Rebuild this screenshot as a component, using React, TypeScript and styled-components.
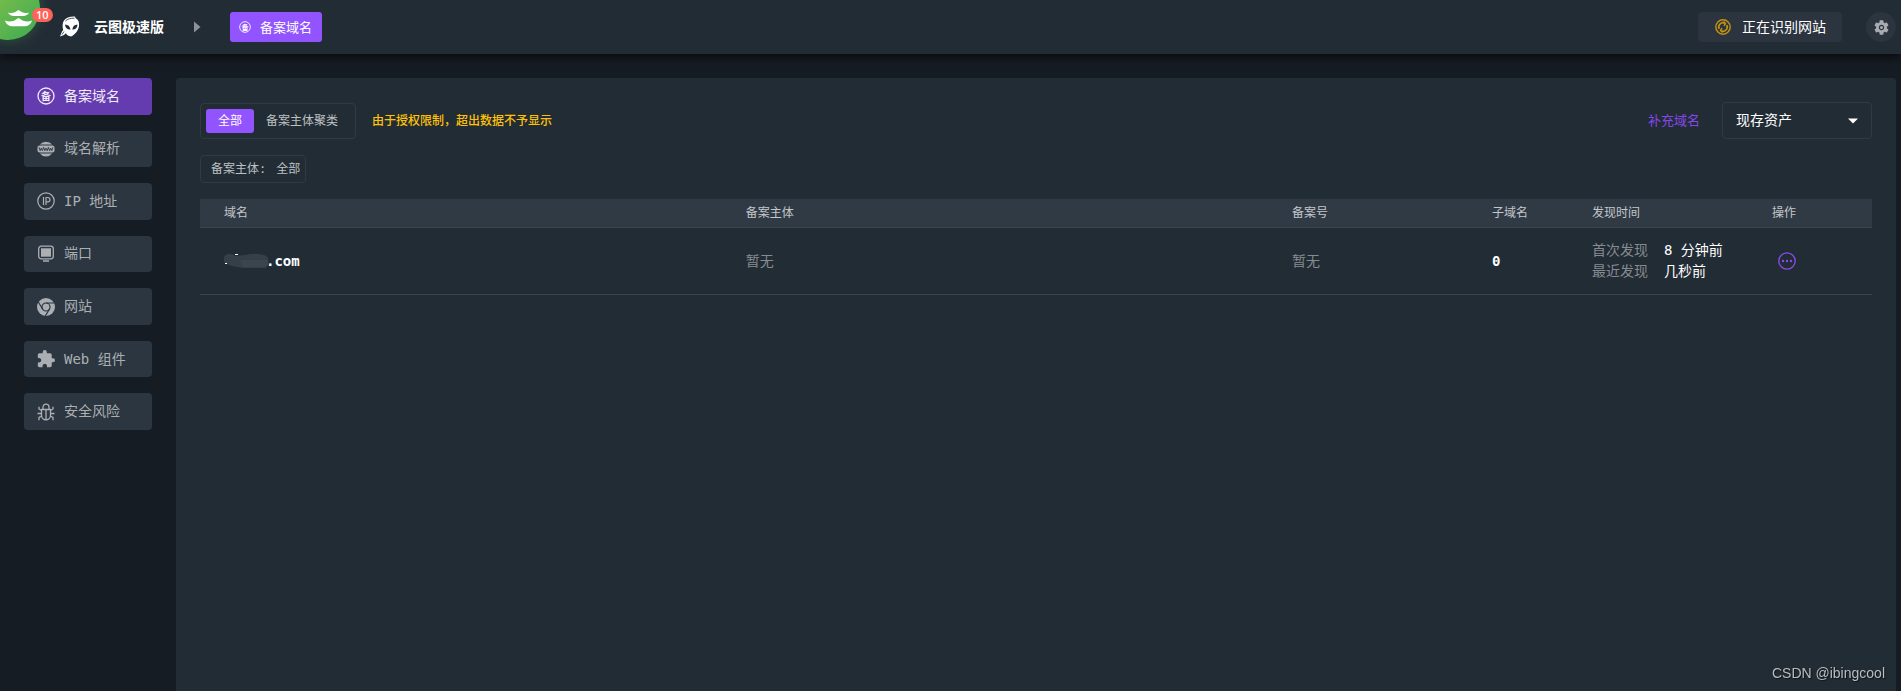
import React from "react";
import styled, { createGlobalStyle, css } from "styled-components";

const Global = createGlobalStyle`
  *, *::before, *::after { box-sizing: border-box; }
  body {
    margin: 0;
    background: #161c23;
    color: #fff;
    font: 14px/21px "DejaVu Sans Mono", "Noto Sans CJK SC", monospace;
  }
  button, select { font: inherit; color: inherit; }
`;

const Page = styled.div`
  min-height: 100vh;
  display: flex;
  flex-direction: column;
`;

const Header = styled.header`
  position: relative;
  z-index: 1;
  display: flex;
  align-items: center;
  height: 54px;
  padding: 0 5px 0 59px;
  background: #222c35;
  box-shadow: 0 2px 10px rgba(0, 0, 0, 0.75);
`;

const Corner = styled.a`
  position: absolute;
  left: -24px;
  top: -24px;
  width: 64px;
  height: 64px;
  border-radius: 50%;
  background: linear-gradient(135deg, #8bc34a 10%, #4caf50 80%);
  box-shadow: 0 0 14px rgba(76, 175, 80, 0.35);
  svg {
    position: absolute;
    left: 29px;
    top: 34px;
  }
`;

const Badge = styled.span`
  position: absolute;
  left: 32px;
  top: 8px;
  height: 14px;
  padding: 0 4px;
  border-radius: 7px;
  background: #ff6259;
  font: 600 11px/14px "Open Sans", sans-serif;
`;

const Brand = styled.h1`
  display: flex;
  align-items: center;
  gap: 13px;
  margin: 0;
  font-size: 14px;
  font-weight: 700;
`;

const Arrow = styled.svg`
  margin: 0 29px 0 30px;
`;

const CrumbButton = styled.button`
  display: flex;
  align-items: center;
  gap: 9px;
  height: 30px;
  padding: 0 10px 0 9px;
  border: 0;
  border-radius: 3px;
  background: #9254ff;
  font-size: 13px;
`;

const StatusButton = styled.button`
  display: flex;
  align-items: center;
  gap: 11px;
  height: 30px;
  margin-left: auto;
  padding: 0 16px 0 17px;
  border: 0;
  border-radius: 4px;
  background: #2c353f;
`;

const GearButton = styled.button`
  display: grid;
  place-items: center;
  width: 30px;
  height: 30px;
  margin-left: 24px;
  padding: 0;
  border: 0;
  border-radius: 50%;
  background: #2c353f;
`;

const Body = styled.div`
  flex: 1;
  display: flex;
  align-items: stretch;
  gap: 24px;
  padding: 24px 5px 0 24px;
`;

const Nav = styled.nav`
  display: grid;
  grid-auto-rows: 1fr;
  gap: 16px;
  flex: 0 0 128px;
  height: 352px;
`;

const NavItem = styled.button<{ $active?: boolean }>`
  display: flex;
  align-items: center;
  gap: 9px;
  padding: 0 13px;
  border: 0;
  border-radius: 4px;
  background: #2c3640;
  color: #abafb3;
  white-space: nowrap;
  ${(p) => p.$active && css`
    background: #653bb0;
    color: #f0ebf7;
  `}
`;

const Panel = styled.main`
  flex: 1;
  min-width: 0;
  padding: 24px;
  border-radius: 4px 4px 0 0;
  background: #222c35;
`;

const Toolbar = styled.div`
  display: flex;
  align-items: center;
  height: 37px;
`;

const Segmented = styled.div`
  display: flex;
  align-items: center;
  align-self: flex-end;
  height: 36px;
  padding: 0 5px;
  border: 1px solid #303a44;
  border-radius: 4px;
`;

const Segment = styled.button<{ $active?: boolean }>`
  height: 24px;
  padding: 0 12px;
  border: 0;
  border-radius: 3px;
  background: ${(p) => (p.$active ? "#9254ff" : "transparent")};
  color: ${(p) => (p.$active ? "#fff" : "#bdc0c2")};
  font-size: 12px;
  line-height: 18px;
`;

const Notice = styled.p`
  margin: 0 auto 0 16px;
  padding-top: 2px;
  color: #ffc107;
  font-size: 12px;
  font-weight: 500;
`;

const AddLink = styled.a`
  margin-right: 22px;
  color: #8448e8;
  font-size: 13px;
  text-decoration: none;
`;

const SelectWrap = styled.div`
  position: relative;
  width: 150px;
  svg {
    position: absolute;
    right: 14px;
    top: 16px;
    pointer-events: none;
  }
`;

const Select = styled.select`
  display: block;
  width: 100%;
  height: 37px;
  padding: 0 32px 0 13px;
  border: 1px solid #303a44;
  border-radius: 4px;
  background: transparent;
  appearance: none;
`;

const FilterChip = styled.button`
  display: flex;
  gap: 10px;
  height: 28px;
  margin: 16px 0;
  padding: 1px 5px 0 10px;
  align-items: center;
  border: 1px solid #303a44;
  border-radius: 4px;
  background: transparent;
  color: #bdc0c2;
  font-size: 12px;
`;

const Table = styled.table`
  width: 100%;
  table-layout: fixed;
  border-collapse: separate;
  border-spacing: 0;
  text-align: left;
`;

const Th = styled.th<{ $width?: string }>`
  width: ${(p) => p.$width ?? "auto"};
  height: 29px;
  padding: 0 0 0 24px;
  border-bottom: 1px solid #3b454e;
  background: #303a45;
  color: #c4c7ca;
  font-size: 12px;
  font-weight: 400;
  line-height: 18px;
`;

const Td = styled.td<{ $muted?: boolean }>`
  height: 67px;
  padding: 0 0 0 24px;
  border-bottom: 1px solid #3b454e;
  color: ${(p) => (p.$muted ? "#868b90" : "#fff")};
`;

const Domain = styled.a`
  display: flex;
  align-items: center;
  color: #fff;
  font-weight: 700;
  text-decoration: none;
`;

const Times = styled.dl`
  display: grid;
  grid-template-columns: 72px auto;
  margin: 0;
  dt { color: #868b90; }
  dd { margin: 0; }
`;

const MoreButton = styled.button`
  display: block;
  width: 18px;
  height: 18px;
  margin-left: 6px;
  padding: 0;
  border: 0;
  background: none;
`;

const Watermark = styled.footer`
  position: fixed;
  right: 16px;
  bottom: 8px;
  color: #b9bdc0;
  font: 14px/20px "Liberation Sans", sans-serif;
  text-shadow: 1px 1px 1px rgba(0, 0, 0, 0.6);
`;

const RecordIcon = ({ size }: { size: number }) => (
  <svg width={size} height={size} viewBox="0 0 18 18" fill="none" stroke="currentColor" strokeWidth="1.3">
    <circle cx="9" cy="9" r="8" />
    <text x="9" y="12.800" textAnchor="middle" fontSize="10" fontWeight="700" fill="currentColor" stroke="none">备</text>
  </svg>
);

const WwwIcon = () => (
  <svg width="18" height="18" viewBox="0 0 18 18" fill="currentColor">
    <path d="M2.800 4.600a8 8 0 0 1 12.400 0zM2.800 13.600a8 8 0 0 0 12.400 0z" />
    <rect x="0.500" y="5.600" width="17" height="7" rx="2" />
    <path d="m2 7.300 1.200 3.400 1.100-2.600 1.100 2.600 1.200-3.400 1.200 3.400 1.200-2.600 1.200 2.600 1.200-3.400 1.200 3.400 1.100-2.600 1.100 2.600L16 7.300" fill="none" stroke="#2c3640" strokeWidth="0.900" />
  </svg>
);

const IpIcon = () => (
  <svg width="18" height="18" viewBox="0 0 18 18" fill="none" stroke="currentColor" strokeWidth="1.2">
    <circle cx="9" cy="9" r="8.200" />
    <path d="M6.500 5v8M9 13V5.500h1.800a2.200 2.200 0 0 1 0 4.400H9" />
  </svg>
);

const PortIcon = () => (
  <svg width="18" height="18" viewBox="0 0 18 18" fill="none" stroke="currentColor" strokeWidth="1.300">
    <rect x="1.700" y="1.200" width="14.600" height="12.600" rx="2.500" />
    <rect x="4" y="3.300" width="10" height="8.400" fill="currentColor" stroke="none" />
    <path d="M6 16h6" strokeWidth="1.500" />
  </svg>
);

const ChromeIcon = () => (
  <svg width="18" height="18" viewBox="0 0 18 18">
    <circle cx="9" cy="9" r="9" fill="currentColor" />
    <g fill="none" stroke="#2c3640" strokeWidth="1.200">
      <circle cx="9" cy="9" r="4" />
      <path d="M9 5h8.500M5.500 11 1.400 4M12.500 11l-4.200 7" />
    </g>
  </svg>
);

const PuzzleIcon = () => (
  <svg width="18" height="18" viewBox="1 1 22 22" fill="currentColor">
    <path d="M20.500 11H19V7c0-1.100-.9-2-2-2h-4V3.500a2.500 2.500 0 0 0-5 0V5H4c-1.100 0-1.990.9-1.990 2v3.800H3.500c1.490 0 2.700 1.210 2.700 2.700s-1.210 2.700-2.700 2.700H2V20c0 1.100.9 2 2 2h3.800v-1.500c0-1.490 1.210-2.700 2.700-2.700s2.700 1.210 2.700 2.700V22H17c1.100 0 2-.9 2-2v-4h1.500a2.500 2.500 0 0 0 0-5z" />
  </svg>
);

const BugIcon = () => (
  <svg width="18" height="18" viewBox="0 0 18 18" fill="none" stroke="currentColor" strokeWidth="1.300">
    <path d="M4.500 6.500h9v5.800a4.500 4.500 0 0 1-9 0zM6 6.300V4.200a3 3 0 0 1 6 0v2.100M9 7v9.500M4.500 7.500 2 6V3.800M13.500 7.500 16 6V3.800M0.500 10.500h4M13.500 10.500h4M4.700 13 2 14.500v2.800M13.300 13l2.700 1.500v2.800" />
  </svg>
);

const AlienIcon = () => (
  <svg width="22" height="22" viewBox="0 0 22 22">
    <path d="M5 4.500C7 1.500 11 .3 16 .5l.5 1.500c3 1.500 4 4.500 3.500 8-.5 4-3.500 8.500-8 10.500-2.500-.5-4-1.500-5.200-3.300L5 19l-4 1.500 2-5 1.200-1.500C3.300 10.500 3.300 7 5 4.500z" fill="#fff" />
    <path d="M6 8.500c3 .2 5 1.800 5.500 5-3 .3-5.200-1.500-5.500-5zM18.500 8.500c-3 .2-4.800 1.800-5.200 5 3 .3 5-1.500 5.200-5z" fill="#222c35" />
    <path d="M6.500 5c2-2 5-3 9-2.800M3 18.500l2-3" fill="none" stroke="#222c35" strokeWidth="0.800" />
  </svg>
);

const LotusIcon = () => (
  <svg width="27" height="18" viewBox="0 0 27 18" fill="#fff">
    <path d="M3 2.500c2.500.8 4.500.6 7-.3L13.500 0 17 2.200c2.500.9 4.500 1.100 7 .3-1 2.300-3 3.500-6 3.500H9c-3 0-5-1.200-6-3.500z" />
    <path d="M0 10.500c3 1.300 6 1.200 9 .2l4.500-2.700 4.500 2.700c3 1 6 1.100 9-.2-1 3.800-4 5.800-8 5.800H8c-4 0-7-2-8-5.800z" />
  </svg>
);

const SyncIcon = () => (
  <svg width="16" height="16" viewBox="0 0 16 16" fill="none" stroke="#c4930f" strokeWidth="1.400">
    <circle cx="8" cy="8" r="7.200" />
    <path d="M4.200 9.800a4.200 4.200 0 0 1 5.600-5.600M11.800 6.200a4.200 4.200 0 0 1-5.600 5.600" strokeWidth="1.700" />
    <path d="M8.500 2.500 10.500 4.500 9 6.800M7.500 13.500l-2-2L7 9.200" />
  </svg>
);

const GearIcon = () => (
  <svg width="15" height="15" viewBox="2 2 20 20" fill="#a9adb2">
    <path d="M19.140 12.940c.04-.3.06-.61.06-.94 0-.32-.02-.64-.07-.94l2.030-1.580c.18-.14.23-.41.12-.61l-1.920-3.320c-.12-.22-.37-.29-.59-.22l-2.390.96c-.5-.38-1.030-.7-1.620-.94l-.36-2.540c-.04-.24-.24-.41-.48-.41h-3.840c-.24 0-.43.17-.47.41l-.36 2.540c-.59.24-1.130.57-1.620.94l-2.390-.96c-.22-.08-.47 0-.59.22L2.740 8.870c-.12.21-.08.47.12.61l2.030 1.580c-.05.3-.09.63-.09.94s.02.64.07.94l-2.030 1.580c-.18.14-.23.41-.12.61l1.920 3.320c.12.22.37.29.59.22l2.390-.96c.5.38 1.030.7 1.620.94l.36 2.540c.05.24.24.41.48.41h3.840c.24 0 .44-.17.47-.41l.36-2.540c.59-.24 1.130-.56 1.620-.94l2.390.96c.22.08.47 0 .59-.22l1.920-3.320c.12-.22.07-.47-.12-.61l-2.010-1.580zM12 15.600c-1.980 0-3.600-1.620-3.600-3.600s1.620-3.600 3.600-3.600 3.600 1.620 3.600 3.600-1.620 3.600-3.600 3.600z" />
    <circle cx="12" cy="12" r="2" />
  </svg>
);

const Smudge = () => (
  <svg width="42" height="16" viewBox="0 0 42 16" overflow="visible">
    <path d="M0 4c2-4 8-4 11-1l10-1c8-2 20-2 23 3 1 5 0 10-4 10H19C11 14 3 12 0 9z" fill="#353f48" />
    <path d="M16 7h28c0 4-1 7-4 7H18z" fill="#3b454e" />
    <path d="M1 10h2v1H1zM11 1h3v1h-3z" fill="#fff" />
  </svg>
);

const NAV = [
  { label: "备案域名", icon: <RecordIcon size={18} /> },
  { label: "域名解析", icon: <WwwIcon /> },
  { label: "IP 地址", icon: <IpIcon /> },
  { label: "端口", icon: <PortIcon /> },
  { label: "网站", icon: <ChromeIcon /> },
  { label: "Web 组件", icon: <PuzzleIcon /> },
  { label: "安全风险", icon: <BugIcon /> },
];

export default function App() {
  return (
    <Page>
      <Global />
      <Header>
        <Corner href="#" aria-label="消息">
          <LotusIcon />
        </Corner>
        <Badge>10</Badge>
        <Brand>
          <AlienIcon />
          云图极速版
        </Brand>
        <Arrow width="7" height="12" viewBox="0 0 7 12">
          <path d="M0 0.500 6.500 6 0 11.500z" fill="#8d9297" />
        </Arrow>
        <CrumbButton>
          <RecordIcon size={12} />
          备案域名
        </CrumbButton>
        <StatusButton>
          <SyncIcon />
          正在识别网站
        </StatusButton>
        <GearButton aria-label="设置">
          <GearIcon />
        </GearButton>
      </Header>
      <Body>
        <Nav>
          {NAV.map((item, i) => (
            <NavItem key={item.label} $active={i === 0}>
              {item.icon}
              {item.label}
            </NavItem>
          ))}
        </Nav>
        <Panel>
          <Toolbar>
            <Segmented>
              <Segment $active>全部</Segment>
              <Segment>备案主体聚类</Segment>
            </Segmented>
            <Notice>由于授权限制，超出数据不予显示</Notice>
            <AddLink href="#">补充域名</AddLink>
            <SelectWrap>
              <Select aria-label="资产范围" defaultValue="现存资产">
                <option>现存资产</option>
              </Select>
              <svg width="10" height="6" viewBox="0 0 10 6">
                <path d="M0 0.500h10L5 5.500z" fill="#fff" />
              </svg>
            </SelectWrap>
          </Toolbar>
          <FilterChip>
            <span>备案主体:</span>
            <span>全部</span>
          </FilterChip>
          <Table>
            <thead>
              <tr>
                <Th $width="31.2%">域名</Th>
                <Th>备案主体</Th>
                <Th $width="200px">备案号</Th>
                <Th $width="100px">子域名</Th>
                <Th $width="180px">发现时间</Th>
                <Th $width="124px">操作</Th>
              </tr>
            </thead>
            <tbody>
              <tr>
                <Td>
                  <Domain href="#">
                    <Smudge />
                    .com
                  </Domain>
                </Td>
                <Td $muted>暂无</Td>
                <Td $muted>暂无</Td>
                <Td><b>0</b></Td>
                <Td>
                  <Times>
                    <dt>首次发现</dt>
                    <dd>8 分钟前</dd>
                    <dt>最近发现</dt>
                    <dd>几秒前</dd>
                  </Times>
                </Td>
                <Td>
                  <MoreButton aria-label="更多操作">
                    <svg width="18" height="18" viewBox="0 0 18 18" fill="#8a4bf0">
                      <circle cx="9" cy="9" r="8.200" fill="none" stroke="#8a4bf0" strokeWidth="1.300" />
                      <circle cx="5" cy="9" r="1.200" />
                      <circle cx="9" cy="9" r="1.200" />
                      <circle cx="13" cy="9" r="1.200" />
                    </svg>
                  </MoreButton>
                </Td>
              </tr>
            </tbody>
          </Table>
        </Panel>
      </Body>
      <Watermark>CSDN @ibingcool</Watermark>
    </Page>
  );
}
